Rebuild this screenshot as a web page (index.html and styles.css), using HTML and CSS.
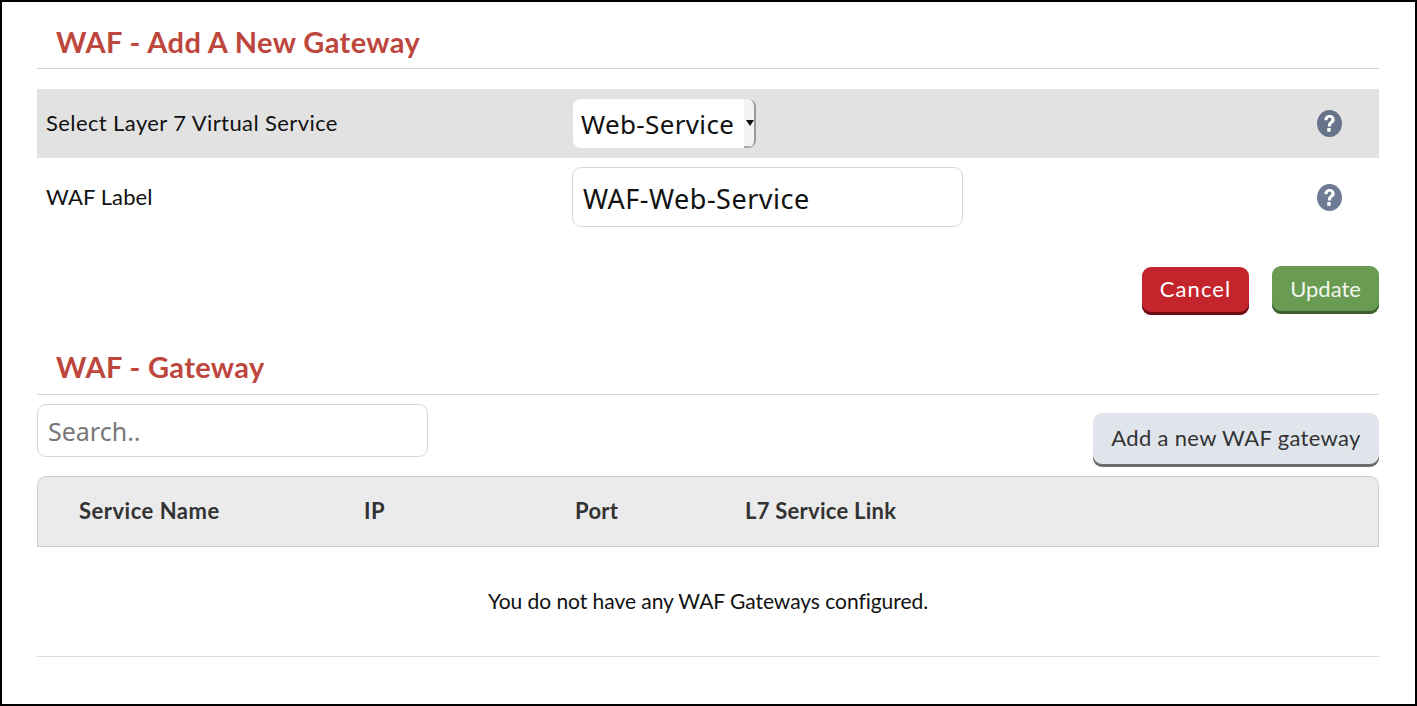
FILE: index.html
```html
<!DOCTYPE html>
<html lang="en">
<head>
<meta charset="utf-8">
<title>WAF - Add A New Gateway</title>
<link rel="stylesheet" href="styles.css">
</head>
<body>
<main class="page">
  <h2 class="section-title">WAF - Add A New Gateway</h2>
  <form class="form">
    <div class="form-row form-row-shaded">
      <label class="form-label">Select Layer 7 Virtual Service</label>
      <div class="form-field">
        <div class="select-box">
          <span class="select-value">Web-Service</span>
          <span class="select-arrow"></span>
        </div>
      </div>
      <svg class="help-icon" viewBox="0 0 26 26" preserveAspectRatio="none" aria-hidden="true">
        <circle cx="13" cy="13" r="13" fill="#677389"/>
        <path d="M7.6 9.9c.1-3.2 2.3-5.2 5.5-5.2 3 0 5.3 1.8 5.3 4.5 0 2-1.1 3-2.4 3.9-1.1.8-1.5 1.2-1.5 2.4v.5h-3.2v-.8c0-2 .7-2.9 2-3.9 1.1-.8 1.7-1.3 1.7-2.3 0-1.1-.8-1.8-1.9-1.8-1.3 0-2.1 1-2.2 2.7z M10.7 17.3h3.5v3.7h-3.5z" fill="#fff"/>
      </svg>
    </div>
    <div class="form-row form-row-plain">
      <label class="form-label form-label-tight">WAF Label</label>
      <div class="form-field">
        <input class="text-input label-input" type="text" value="WAF-Web-Service">
      </div>
      <svg class="help-icon" viewBox="0 0 26 26" preserveAspectRatio="none" aria-hidden="true">
        <circle cx="13" cy="13" r="13" fill="#6f7b94"/>
        <path d="M7.6 9.9c.1-3.2 2.3-5.2 5.5-5.2 3 0 5.3 1.8 5.3 4.5 0 2-1.1 3-2.4 3.9-1.1.8-1.5 1.2-1.5 2.4v.5h-3.2v-.8c0-2 .7-2.9 2-3.9 1.1-.8 1.7-1.3 1.7-2.3 0-1.1-.8-1.8-1.9-1.8-1.3 0-2.1 1-2.2 2.7z M10.7 17.3h3.5v3.7h-3.5z" fill="#fff"/>
      </svg>
    </div>
    <div class="form-actions">
      <button class="btn btn-cancel" type="button">Cancel</button>
      <button class="btn btn-update" type="button">Update</button>
    </div>
  </form>

  <h2 class="section-title section-title-second">WAF - Gateway</h2>
  <div class="toolbar">
    <input class="text-input search-input" type="text" placeholder="Search..">
    <button class="btn btn-add" type="button">Add a new WAF gateway</button>
  </div>
  <div class="table-head">
    <span class="col col-name">Service Name</span>
    <span class="col col-ip">IP</span>
    <span class="col col-port">Port</span>
    <span class="col col-link">L7 Service Link</span>
  </div>
  <p class="empty-note">You do not have any WAF Gateways configured.</p>
</main>
</body>
</html>
```
FILE: styles.css
```css
* { box-sizing: border-box; }
html, body { margin: 0; padding: 0; }
body {
  width: 1417px;
  height: 706px;
  border: 2px solid #000;
  background: #fff;
  font-family: "Lato", "Noto Sans", sans-serif;
  color: #111;
  overflow: hidden;
}
.page { padding: 0 36px 0 35px; }
.section-title {
  margin: 0;
  height: 67px;
  padding: 21px 0 0 19px;
  font-size: 29px;
  line-height: 38px;
  font-weight: 700;
  letter-spacing: 0.4px;
  color: #bd463d;
  border-bottom: 1px solid #d3d3d3;
}
.section-title-second { height: 80px; padding-top: 33px; letter-spacing: 0.35px; }
.form { padding-top: 20px; }
.form-row { display: flex; align-items: center; padding-left: 9px; }
.form-row-shaded { height: 69px; background: #e2e2e2; }
.form-row-plain { height: 78px; }
.form-label { width: 526px; font-size: 22px; letter-spacing: 0.4px; color: #111; flex: none; padding-bottom: 2px; }
.form-label-tight { letter-spacing: 0.1px; }
.form-field { width: 745px; flex: none; }
.select-box {
  display: flex;
  align-items: center;
  width: 183px;
  height: 49px;
  margin-left: 1px;
  background: #fff;
  border-radius: 8px;
  border-right: 2px solid #9a9a9a;
  box-shadow: inset -12px -2px 0 -10px #9a9a9a;
  overflow: hidden;
}
.select-value { padding-left: 8px; width: 171px; font-family: "Noto Sans", sans-serif; font-size: 26px; letter-spacing: 0.35px; color: #111; white-space: nowrap; }
.select-arrow {
  position: relative;
  flex: 1;
  height: 100%;
  background: #f3f3f3;
  border-bottom: 2px solid #a8a8a8;
}
.select-arrow::after {
  content: "";
  position: absolute;
  top: 21px;
  left: 2px;
  border-left: 4px solid transparent;
  border-right: 4px solid transparent;
  border-top: 6px solid #111;
}
.help-icon { width: 25px; height: 27px; flex: none; }
.text-input {
  display: block;
  border: 1px solid #d8d8d8;
  border-radius: 9px;
  background: #fff;
  font-family: "Noto Sans", sans-serif;
  color: #111;
  outline: none;
}
.label-input { width: 391px; height: 60px; font-size: 27px; letter-spacing: 0.5px; padding: 2px 10px 0; }
.search-input { width: 391px; height: 53px; font-size: 25px; padding: 0 10px; }
.search-input::placeholder { color: #777; opacity: 1; }
.form-actions { display: flex; justify-content: flex-end; align-items: flex-start; gap: 23px; padding-top: 30px; height: 79px; }
.btn {
  border: 0;
  border-radius: 9px;
  font-family: "Lato", "Noto Sans", sans-serif;
  font-size: 22px;
  padding: 0 0 6px;
}
.btn-cancel { width: 107px; height: 48px; margin-top: 1px; background: #c4252d; color: #fff; letter-spacing: 1.1px; box-shadow: inset 0 -3px 0 #6d0c13; }
.btn-update { width: 107px; height: 48px; padding-bottom: 4px; background: #699b53; color: #f2f6ef; box-shadow: inset 0 -3px 0 #3f6030; }
.toolbar { display: flex; justify-content: space-between; align-items: flex-start; padding-top: 9px; height: 81px; }
.btn-add { width: 286px; height: 54px; margin-top: 9px; background: #e0e5ec; color: #333; letter-spacing: 0.33px; box-shadow: inset 0 -3px 0 #6d6d6d; }
.table-head {
  display: flex;
  align-items: center;
  height: 71px;
  padding-bottom: 2px;
  background: #ebebeb;
  border: 1px solid #cfcfcf;
  border-radius: 9px 9px 0 0;
  font-size: 22px;
  font-weight: 700;
  letter-spacing: 0.5px;
  color: #333;
}
.col { flex: none; }
.col-name { width: 326px; padding-left: 41px; }
.col-ip { width: 211px; }
.col-port { width: 170px; letter-spacing: 0.3px; }
.col-link { flex: 1; letter-spacing: 0.25px; }
.empty-note {
  margin: 0;
  height: 110px;
  padding-top: 41px;
  text-align: center;
  font-size: 21px;
  letter-spacing: -0.05px;
  line-height: 26px;
  color: #111;
  border-bottom: 1px solid #dcdcdc;
}
```
